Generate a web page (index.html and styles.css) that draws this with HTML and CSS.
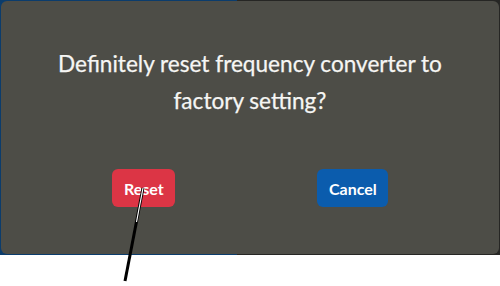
FILE: index.html
```html
<!DOCTYPE html>
<html>
<head>
<meta charset="utf-8">
<link rel="stylesheet" href="styles.css">
</head>
<body>
<div class="scene">
  <div class="dialog">
    <p class="message">Definitely reset frequency converter to<br>factory setting?</p>
    <div class="actions">
      <button class="btn btn-reset">Reset</button>
      <button class="btn btn-cancel">Cancel</button>
    </div>
  </div>
</div>
<svg class="pointer" width="500" height="286" viewBox="0 0 500 286">
  <line x1="143" y1="188" x2="125" y2="281" stroke="#000" stroke-width="3"/>
  <line x1="143" y1="188" x2="136.5" y2="222" stroke="#fff" stroke-width="1.2"/>
</svg>
</body>
</html>
```
FILE: styles.css
```css
html, body {
  margin: 0;
  padding: 0;
  background: #ffffff;
  width: 500px;
  height: 286px;
  overflow: hidden;
  position: relative;
  font-family: "Lato", "Liberation Sans", sans-serif;
}
.scene {
  height: 255px;
  padding: 1px 1px 1px 1px;
  box-sizing: border-box;
  background: linear-gradient(to right, #0b3c6c 0, #0b3c6c 237px, #262624 237px, #262624 100%);
}
.dialog {
  height: 253px;
  background: #4d4d47;
  border-radius: 6px;
  display: flex;
  flex-direction: column;
  align-items: center;
}
.message {
  margin: 0;
  padding-top: 44px;
  text-align: center;
  color: #f6f6f4;
  font-size: 22.6px;
  line-height: 37px;
  -webkit-text-stroke: 0.25px #f6f6f4;
}
.actions {
  display: flex;
  justify-content: center;
  gap: 142px;
  margin-top: 50px;
}
.btn {
  font-family: inherit;
  font-size: 16px;
  font-weight: 700;
  color: #ffffff;
  border: none;
  border-radius: 6px;
  height: 38px;
  padding: 0 12px;
}
.btn-reset {
  background: #dc3545;
  width: 63px;
}
.btn-cancel {
  background: #0b5cad;
  width: 71px;
}
.pointer {
  position: absolute;
  left: 0;
  top: 0;
}
```
